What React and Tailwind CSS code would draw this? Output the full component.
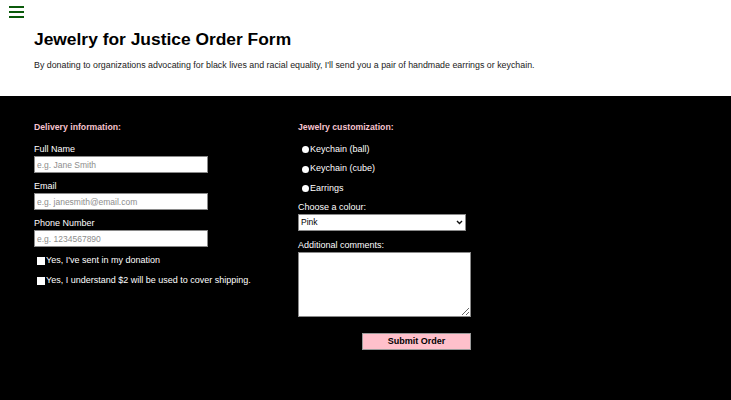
import { useState } from "react";

const font = { fontFamily: '"Liberation Sans", Arial, Helvetica, sans-serif' };

function TextField({ label, placeholder, type = "text" }) {
  return (
    <div className="flex flex-col">
      <label className="h-[13px] text-[9px] leading-[13px] text-white">{label}</label>
      <input
        type={type}
        placeholder={placeholder}
        className="block h-[17px] w-[174px] border border-[#8a8a8a] bg-white px-[2px] text-[8.5px] text-black placeholder:text-[#8d8d8d] outline-none"
      />
    </div>
  );
}

function Check({ children }) {
  return (
    <label className="flex h-[13px] items-center text-[9px] text-white">
      <input type="checkbox" className="ml-[3px] mr-[1px] h-[8px] w-[8px] appearance-none bg-white" />
      {children}
    </label>
  );
}

function Radio({ children, checked, onChange }) {
  return (
    <label className="flex h-[13px] items-center text-[9px] text-white">
      <input
        type="radio"
        name="jewelry"
        checked={checked}
        onChange={onChange}
        className="ml-[4px] mr-[1px] h-[7px] w-[7px] appearance-none rounded-full bg-white checked:border-2 checked:border-[#555]"
      />
      {children}
    </label>
  );
}

export default function App() {
  const [kind, setKind] = useState("");

  return (
    <div className="min-h-[400px] bg-black" style={font}>
      <header className="h-[96px] bg-white pl-[34px] pt-[6px]">
        <button className="-ml-[25px] flex flex-col gap-[3px]" aria-label="menu">
          <span className="h-[2px] w-[15px] bg-[#0b5a0b]" />
          <span className="h-[2px] w-[15px] bg-[#0b5a0b]" />
          <span className="h-[2px] w-[15px] bg-[#0b5a0b]" />
        </button>
        <h1 className="mt-[11px] text-[17.4px] font-bold leading-[20px] text-black">
          Jewelry for Justice Order Form
        </h1>
        <p className="mt-[10px] text-[8.85px] leading-[12px] text-[#222]">
          By donating to organizations advocating for black lives and racial equality, I'll send you a pair of handmade
          earrings or keychain.
        </p>
      </header>

      <form className="grid grid-cols-[264px_1fr] pl-[34px] pt-[25px]" onSubmit={(e) => e.preventDefault()}>
        <div className="flex flex-col">
          <h2 className="h-[12px] text-[8.7px] font-bold leading-[12px] text-[#f7c4cf]">Delivery information:</h2>
          <div className="mt-[10px] flex flex-col gap-[7px]">
            <TextField label="Full Name" placeholder="e.g. Jane Smith" />
            <TextField label="Email" placeholder="e.g. janesmith@email.com" type="email" />
            <TextField label="Phone Number" placeholder="e.g. 1234567890" />
            <Check>Yes, I've sent in my donation</Check>
            <Check>Yes, I understand $2 will be used to cover shipping.</Check>
          </div>
        </div>

        <div className="flex flex-col">
          <h2 className="h-[12px] text-[8.7px] font-bold leading-[12px] text-[#f7c4cf]">Jewelry customization:</h2>
          <div className="mt-[10px] flex flex-col gap-[6.5px]">
            <Radio checked={kind === "ball"} onChange={() => setKind("ball")}>Keychain (ball)</Radio>
            <Radio checked={kind === "cube"} onChange={() => setKind("cube")}>Keychain (cube)</Radio>
            <Radio checked={kind === "earrings"} onChange={() => setKind("earrings")}>Earrings</Radio>
          </div>
          <label className="mt-[6px] h-[13px] text-[9px] leading-[13px] text-white">Choose a colour:</label>
          <div className="relative h-[17px] w-[168px]">
            <select className="block h-[17px] w-full appearance-none border border-[#8a8a8a] bg-white px-[2px] text-[8.5px] text-black outline-none">
              <option>Pink</option>
              <option>Purple</option>
              <option>Blue</option>
              <option>Green</option>
            </select>
            <svg className="pointer-events-none absolute right-[3px] top-[6px]" width="7" height="5" viewBox="0 0 7 5">
              <path d="M1 1l2.5 2.5L6 1" fill="none" stroke="#111" strokeWidth="1.4" />
            </svg>
          </div>
          <label className="mt-[8px] h-[13px] text-[9px] leading-[13px] text-white">Additional comments:</label>
          <textarea className="block h-[65px] w-[173px] border border-[#8a8a8a] bg-white text-[9px] text-black outline-none" />
          <button
            type="submit"
            className="ml-[64px] mt-[16px] h-[17px] w-[109px] border border-[#9a9a9a] bg-[#ffc0cb] text-[9px] font-bold text-black"
          >
            Submit Order
          </button>
        </div>
      </form>
    </div>
  );
}
